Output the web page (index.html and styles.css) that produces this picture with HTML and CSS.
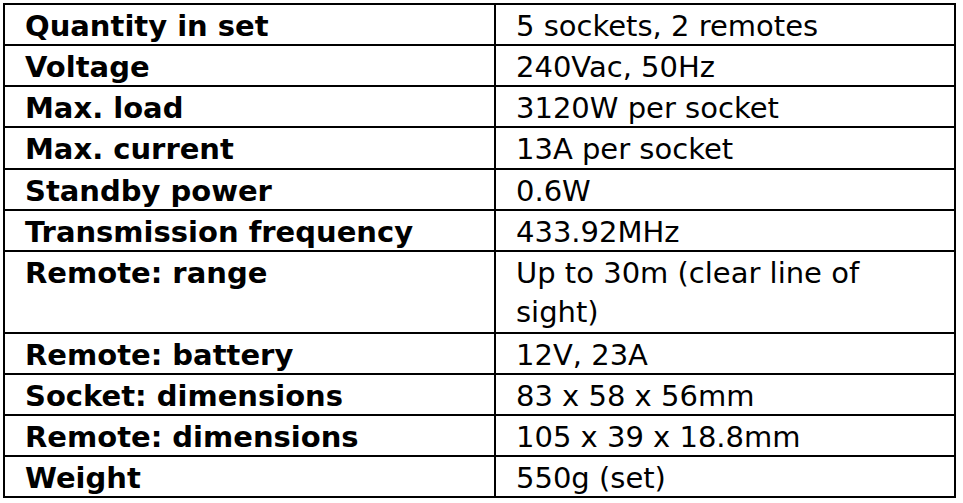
FILE: index.html
```html
<!DOCTYPE html>
<html>
<head>
<meta charset="utf-8">
<link rel="stylesheet" href="styles.css">
</head>
<body>
<table class="spec">
<tbody>
<tr><td class="k">Quantity in set</td><td class="v">5 sockets, 2 remotes</td></tr>
<tr><td class="k">Voltage</td><td class="v">240Vac, 50Hz</td></tr>
<tr><td class="k">Max. load</td><td class="v">3120W per socket</td></tr>
<tr><td class="k">Max. current</td><td class="v">13A per socket</td></tr>
<tr><td class="k">Standby power</td><td class="v">0.6W</td></tr>
<tr><td class="k">Transmission frequency</td><td class="v">433.92MHz</td></tr>
<tr class="tall"><td class="k">Remote: range</td><td class="v">Up to 30m (clear line of<br>sight)</td></tr>
<tr><td class="k">Remote: battery</td><td class="v">12V, 23A</td></tr>
<tr><td class="k">Socket: dimensions</td><td class="v">83 x 58 x 56mm</td></tr>
<tr><td class="k">Remote: dimensions</td><td class="v">105 x 39 x 18.8mm</td></tr>
<tr><td class="k">Weight</td><td class="v">550g (set)</td></tr>
</tbody>
</table>
</body>
</html>
```
FILE: styles.css
```css
html, body {
  margin: 0;
  padding: 0;
  background: #fff;
}
body {
  padding: 3px 0 0 3px;
}
.spec {
  border-collapse: collapse;
  width: 953px;
  table-layout: fixed;
  font-family: "DejaVu Sans", Verdana, sans-serif;
  font-size: 29px;
  color: #000;
}
.spec td {
  border: 2px solid #000;
  padding: 4px 0 0 20px;
  height: 35.15px;
  line-height: 35px;
  vertical-align: top;
  white-space: nowrap;
  box-sizing: content-box;
}
.spec .k {
  width: 469px;
  font-weight: bold;
}
.spec .v {
  font-weight: normal;
}
.spec .tall td {
  padding-top: 2px;
  height: 78px;
  line-height: 39px;
}
```
